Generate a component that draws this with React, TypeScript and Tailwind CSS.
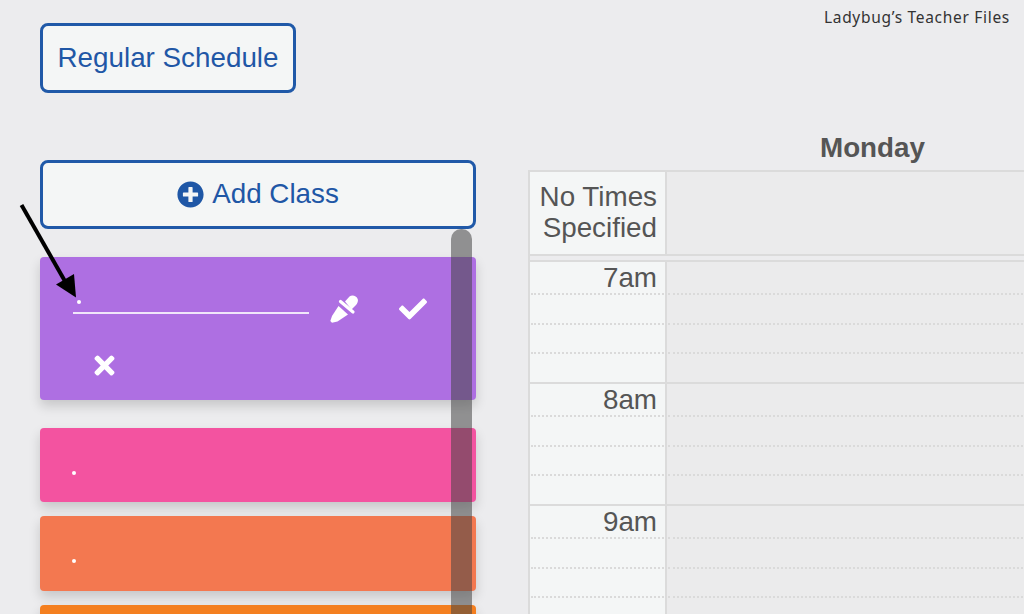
import React from 'react';
import { FaCheck, FaPlusCircle, FaTimes } from 'react-icons/fa';

const hours = ['7am', '8am', '9am'];

function Slots({ label }: { label?: string }) {
  return (
    <>
      <div className="mx-[1px] h-[33px] border-b-2 border-dotted border-[#dadada] pr-[7px] text-right leading-[32px]">{label}</div>
      <div className="mx-[1px] h-[30px] border-b-2 border-dotted border-[#dadada]" />
      <div className="mx-[1px] h-[29px] border-b-2 border-dotted border-[#dadada]" />
      <div className="h-[30px] border-b-2 border-[#dbdbdb]" />
    </>
  );
}

function ClassCard({ color, height }: { color: string; height: string }) {
  return (
    <div className={`${color} ${height} rounded-[4px] pl-[32px] shadow-[0_6px_12px_rgba(0,0,0,0.16)]`}>
      <div className="pt-[43px]">
        <div className="h-[4px] w-[4px] rounded-full bg-white" />
      </div>
    </div>
  );
}

// solid dropper, the package one has a hollow tip
function Dropper() {
  return (
    <svg className="ml-[21px] h-[28px] w-[28px]" viewBox="0 0 28 28" fill="#fff">
      <path d="M15 6.500 L19.500 1.500 C22 -0.500 26.500 0.500 27.700 4 C28.500 7 27 9 25.500 10.500 L21.500 14.500 Z" />
      <path d="M10.500 6.500 L23 17" stroke="#fff" strokeWidth="3.200" strokeLinecap="round" />
      <path d="M8.500 11 L18 19.500 L7.500 26.500 L2 27.700 L0.300 26 L2 21 Z" />
    </svg>
  );
}

export default function App() {
  return (
    <div className="relative flex h-[614px] w-[1024px] overflow-hidden bg-[#ececee] font-['Liberation_Sans',sans-serif] text-[27.8px]">
      <p className="absolute right-[14px] top-[7px] font-['Noto_Sans',sans-serif] text-[15.500px] leading-[20px] tracking-[0.7px] text-[#333]">
        Ladybug’s Teacher Files
      </p>

      {/* Left column */}
      <div className="relative ml-[40px] w-[436px] shrink-0 pt-[23px]">
        <button className="flex h-[70px] w-[256px] items-center justify-center rounded-[8px] border-[3px] border-[#2059a8] bg-[#f4f6f6] text-[#1f57a6]">
          Regular Schedule
        </button>

        <button className="mt-[67px] flex h-[69px] w-full items-center justify-center gap-[8px] rounded-[8px] border-[3px] border-[#2059a8] bg-[#f4f6f6] pb-[1px] text-[#1f57a6]">
          <FaPlusCircle size={27} />
          Add Class
        </button>

        {/* Class being edited */}
        <div className="mt-[28px] h-[143px] rounded-[4px] bg-[#ae6fe2] pl-[33px] text-white shadow-[0_6px_12px_rgba(0,0,0,0.16)]">
          <div className="flex h-[104px] items-center">
            <div className="-mt-[16px] h-[26px] w-[236px] border-b-2 border-[#f1e6fa] pl-[4px] pt-[12px]">
              <div className="h-[4px] w-[4px] rounded-full bg-white" />
            </div>
            <Dropper />
            <FaCheck size={28} className="ml-[41px]" />
          </div>
          <FaTimes size={29} className="-mt-[10px] ml-[17px]" />
        </div>

        <div className="mt-[28px]">
          <ClassCard color="bg-[#f353a0]" height="h-[74px]" />
        </div>
        <div className="mt-[14px]">
          <ClassCard color="bg-[#f37850]" height="h-[75px]" />
        </div>
        <div className="mt-[14px]">
          <ClassCard color="bg-[#f47f20]" height="h-[75px]" />
        </div>

        {/* Overlay scrollbar */}
        <div className="absolute bottom-0 left-[411px] top-[229px] w-[21px] rounded-t-[10px] bg-[rgba(70,70,70,0.55)]" />
      </div>

      {/* Schedule */}
      <div className="ml-[52px] min-w-0 flex-1 text-[#555]">
        <h2 className="h-[170px] pl-[193px] pt-[132px] text-center font-bold leading-[32px]">Monday</h2>
        <div className="grid grid-cols-[137px_1fr] border-l-2 border-t-2 border-[#dbdbdb]">
          <div className="h-[84px] border-b-2 border-r-2 border-[#dbdbdb] bg-[#f4f6f6] pr-[8px] pt-[9px] text-right leading-[31px]">
            No Times
            <br />
            Specified
          </div>
          <div className="h-[84px] border-b-2 border-[#dbdbdb] bg-[#ebebec]" />
          <div className="col-span-2 h-[6px] border-b-2 border-[#dbdbdb]" />
          {hours.map((hour) => (
            <React.Fragment key={hour}>
              <div className="border-r-2 border-[#dbdbdb] bg-[#f4f6f6]">
                <Slots label={hour} />
              </div>
              <div className="bg-[#ebebec]">
                <Slots />
              </div>
            </React.Fragment>
          ))}
        </div>
      </div>

      {/* Annotation arrow */}
      <svg className="absolute left-0 top-0 h-[320px] w-[100px]" viewBox="0 0 100 320" fill="none">
        <path d="M21.500 205 L66 283" stroke="#000" strokeWidth="4" />
        <path d="M56 284.500 L74 274 L76 297.500 Z" fill="#000" />
      </svg>
    </div>
  );
}
